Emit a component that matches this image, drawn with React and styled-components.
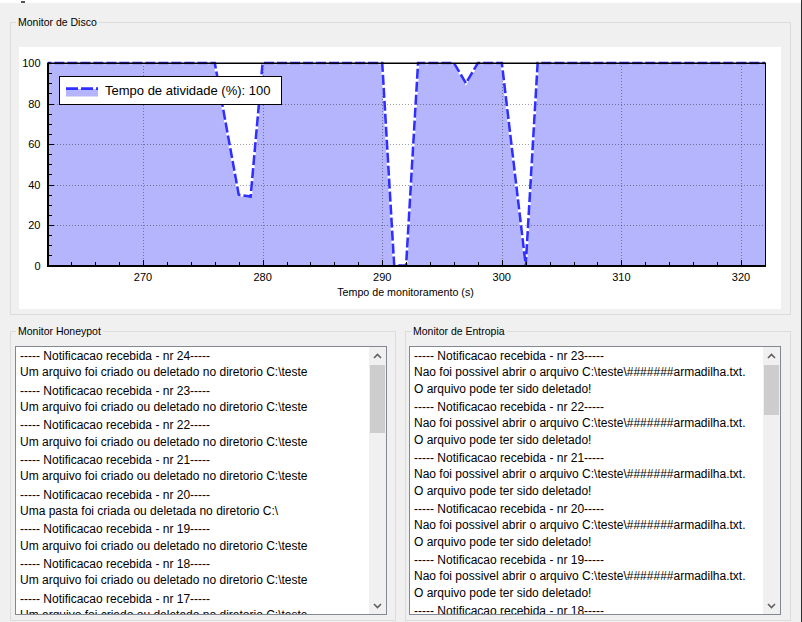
import React from 'react';
import styled, { createGlobalStyle } from 'styled-components';

const GlobalStyle = createGlobalStyle`
  html, body { margin: 0; padding: 0; background: #f0f0f0; }
  body {
    width: 802px;
    height: 622px;
    overflow: hidden;
    font-family: "Liberation Sans", Arial, sans-serif;
    color: #000;
  }
`;

const Window = styled.div`
  display: flex;
  width: 802px;
  height: 622px;
`;

const Main = styled.div`
  width: 801px;
  display: flex;
  flex-direction: column;
  background: #f0f0f0;
`;

const Edge = styled.div`
  width: 1px;
  background: #2e2e2e;
`;

const TopStrip = styled.div`
  height: 3px;
  flex-shrink: 0;
  background: #fff;
  display: flex;
  align-items: flex-end;
  padding-left: 21px;
`;

const StripMark = styled.span`
  width: 4px;
  height: 2px;
  background: #555;
`;

const Group = styled.div`
  position: relative;
  box-sizing: border-box;
  flex-shrink: 0;
  border: 1px solid #dcdcdc;
  width: ${(p) => p.$w}px;
  height: ${(p) => p.$h}px;
  padding: ${(p) => p.$pad};
  margin: ${(p) => p.$margin || '0'};
  display: flex;
  flex-direction: column;
`;

const GroupTitle = styled.span`
  position: absolute;
  left: 5px;
  top: -7px;
  padding: 0 2px;
  background: #f0f0f0;
  font-size: 10.5px;
  line-height: 12px;
  white-space: nowrap;
`;

const ChartArea = styled.div`
  flex: 1;
  background: #fff;
  display: flex;
`;

const BottomRow = styled.div`
  display: flex;
  gap: 9px;
  margin: 16px 0 0 10px;
`;

const TextBox = styled.div`
  box-sizing: border-box;
  flex: 1;
  border: 1px solid #828790;
  background: #fff;
  display: flex;
  overflow: hidden;
`;

const Content = styled.div`
  flex: 1;
  overflow: hidden;
  padding: 1px 0 0 4px;
  font-size: 12px;
  line-height: 16.3px;
  white-space: pre;
`;

const Block = styled.div`
  margin-bottom: 2.1px;
`;

const Line = styled.div``;

const Scrollbar = styled.div`
  width: 17px;
  flex-shrink: 0;
  background: #f0f0f0;
  display: flex;
  flex-direction: column;
`;

const ScrollButton = styled.div`
  height: 17px;
  flex-shrink: 0;
  display: flex;
  align-items: center;
  justify-content: center;
`;

const Track = styled.div`
  flex: 1;
  padding: 1px 1px 0 1px;
`;

const Thumb = styled.div`
  height: ${(p) => p.$h}px;
  background: #cdcdcd;
`;

const Chevron = ({ down }) => (
  <svg width="9" height="6" viewBox="0 0 9 6">
    <polyline
      points={down ? '1,1 4.5,4.5 8,1' : '1,5 4.5,1.5 8,5'}
      fill="none"
      stroke="#606060"
      strokeWidth="1.6"
    />
  </svg>
);

const ScrollBarView = ({ thumb }) => (
  <Scrollbar>
    <ScrollButton>
      <Chevron />
    </ScrollButton>
    <Track>
      <Thumb $h={thumb} />
    </Track>
    <ScrollButton>
      <Chevron down />
    </ScrollButton>
  </Scrollbar>
);

/* ---------- Chart ---------- */
const X0 = 29;
const X1 = 746;
const Y0 = 16;
const Y1 = 218.5;
const xs = (v) => 124 + (v - 270) * 11.96;
const ys = (val) => 218.5 - val * 2.025;
const crisp = (n) => Math.round(n) + 0.5;

const data = [
  [261.5, 100], [276, 100], [278, 35], [279, 34], [280, 100],
  [290, 100], [291, 0], [292, 0], [293, 100],
  [296, 100], [297, 90], [298, 100],
  [300, 100], [302, 0], [303, 100], [322.5, 100],
];

const LINE_BLUE = '#2f2fff';
const FILL = '#b5b5fe';
const FONT = '"Liberation Sans", Arial, sans-serif';

function DiskChart() {
  const pts = data.map(([v, val]) => `${xs(v).toFixed(2)},${ys(val).toFixed(2)}`).join(' ');
  const area = `${pts} ${xs(322.5)},${Y1} ${xs(261.5)},${Y1}`;

  const vGrid = [270, 280, 290, 300, 310, 320];
  const hGrid = [20, 40, 60, 80];
  const xTicks = [];
  for (let v = 264; v <= 322; v += 2) xTicks.push(v);
  const yTicks = [];
  for (let v = 5; v < 100; v += 5) yTicks.push(v);
  const yLabels = [0, 20, 40, 60, 80, 100];

  return (
    <svg width="762" height="262" viewBox="0 0 762 262" style={{ display: 'block' }}>
      <defs>
        <clipPath id="plot">
          <rect x={X0} y={Y0} width={X1 - X0} height={Y1 - Y0} />
        </clipPath>
        <clipPath id="plotx">
          <rect x={X0} y={0} width={X1 - X0} height={262} />
        </clipPath>
      </defs>
      <polygon points={area} fill={FILL} clipPath="url(#plot)" />
      <g stroke="rgba(0,0,0,0.38)" strokeWidth="1" strokeDasharray="1 2">
        {vGrid.map((v) => (
          <line key={v} x1={crisp(xs(v))} x2={crisp(xs(v))} y1={Y0} y2={Y1} />
        ))}
        {hGrid.map((v) => (
          <line key={v} x1={X0} x2={X1} y1={crisp(ys(v))} y2={crisp(ys(v))} />
        ))}
      </g>
      {/* series line */}
      <g clipPath="url(#plotx)">
        <polyline points={pts} fill="none" stroke="#fff" strokeWidth="2.6" />
        <polyline
          points={pts}
          fill="none"
          stroke={LINE_BLUE}
          strokeWidth="2.6"
          strokeDasharray="10 3"
          strokeLinejoin="miter"
        />
      </g>
      {/* frame */}
      <line x1={X0} x2={X1 + 1} y1={16.2} y2={16.2} stroke="#000" strokeWidth="1.5" />
      <line x1={746.5} x2={746.5} y1={16} y2={219} stroke="#000" strokeWidth="1" />
      {/* axes */}
      <line x1={X0} x2={X0} y1={15.5} y2={220} stroke="#000" strokeWidth="2" />
      <line x1={28} x2={747} y1={219} y2={219} stroke="#000" strokeWidth="2" />
      <g stroke="#000" strokeWidth="1">
        {xTicks.map((v) => (
          <line
            key={v}
            x1={crisp(xs(v))}
            x2={crisp(xs(v))}
            y1={218}
            y2={v % 10 === 0 ? 213 : 215}
          />
        ))}
        {yTicks.map((v) => (
          <line
            key={v}
            x1={30}
            x2={v % 20 === 0 ? 35 : 33}
            y1={crisp(ys(v))}
            y2={crisp(ys(v))}
          />
        ))}
      </g>
      {/* labels */}
      <g fontFamily={FONT} fontSize="11" fill="#000">
        {yLabels.map((v) => (
          <text key={v} x={21.5} y={ys(v) + 4} textAnchor="end">
            {v}
          </text>
        ))}
        {vGrid.map((v) => (
          <text key={v} x={xs(v)} y={233.5} textAnchor="middle">
            {v}
          </text>
        ))}
      </g>
      <text x={386.5} y={248.5} textAnchor="middle" fontFamily={FONT} fontSize="10.7" fill="#000">
        Tempo de monitoramento (s)
      </text>
      {/* legend */}
      <rect x={40.5} y={29.5} width={222} height={28} fill="#fff" stroke="#000" strokeWidth="1" />
      <rect x={47} y={42} width={32} height={7.5} fill={FILL} />
      <line x1={47} x2={79} y1={41.6} y2={41.6} stroke={LINE_BLUE} strokeWidth="2.6" strokeDasharray="12 3" />
      <text x={86} y={48} fontFamily={FONT} fontSize="13" fill="#000">
        Tempo de atividade (%): 100
      </text>
    </svg>
  );
}

/* ---------- Logs ---------- */
const sep = (n) => `----- Notificacao recebida - nr ${n}-----`;
const fileMsg = 'Um arquivo foi criado ou deletado no diretorio C:\\teste';
const folderMsg = 'Uma pasta foi criada ou deletada no diretorio C:\\';

const honeypot = [24, 23, 22, 21, 20, 19, 18, 17].map((n) => [
  sep(n),
  n === 20 ? folderMsg : fileMsg,
]);

const entropia = [23, 22, 21, 20, 19, 18].map((n) => [
  sep(n),
  'Nao foi possivel abrir o arquivo C:\\teste\\#######armadilha.txt.',
  'O arquivo pode ter sido deletado!',
]);

const LogPanel = ({ blocks, thumb }) => (
  <TextBox>
    <Content>
      {blocks.map((lines, i) => (
        <Block key={i}>
          {lines.map((l, j) => (
            <Line key={j}>{l}</Line>
          ))}
        </Block>
      ))}
    </Content>
    <ScrollBarView thumb={thumb} />
  </TextBox>
);

export default function App() {
  return (
    <>
      <GlobalStyle />
      <Window>
        <Main>
          <TopStrip>
            <StripMark />
          </TopStrip>
          <Group $w={781} $h={293} $pad="24px 9px 5px 8px" $margin="19px 0 0 10px">
            <GroupTitle>Monitor de Disco</GroupTitle>
            <ChartArea>
              <DiskChart />
            </ChartArea>
          </Group>
          <BottomRow>
            <Group $w={386} $h={290} $pad="14px 8px 5px 4px">
              <GroupTitle>Monitor Honeypot</GroupTitle>
              <LogPanel blocks={honeypot} thumb={68} />
            </Group>
            <Group $w={386} $h={290} $pad="14px 9px 5px 3px">
              <GroupTitle>Monitor de Entropia</GroupTitle>
              <LogPanel blocks={entropia} thumb={50} />
            </Group>
          </BottomRow>
        </Main>
        <Edge />
      </Window>
    </>
  );
}
